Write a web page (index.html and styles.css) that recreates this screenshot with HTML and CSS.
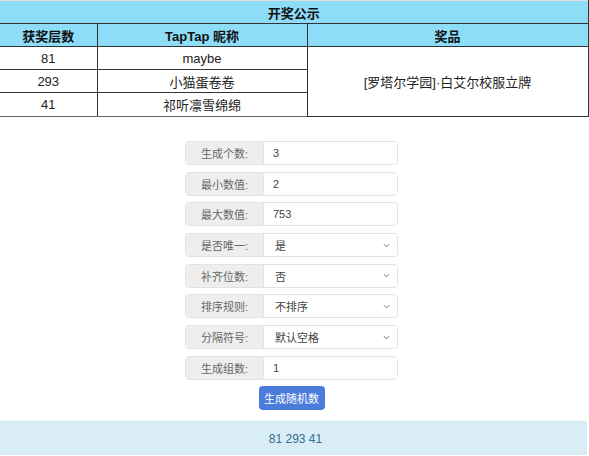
FILE: index.html
```
<!DOCTYPE html>
<html lang="zh">
<head>
<meta charset="utf-8">
<title>开奖公示</title>
<link rel="stylesheet" href="styles.css">
</head>
<body>
<table class="prize">
  <colgroup><col class="c1"><col class="c2"><col class="c3"></colgroup>
  <tr class="title"><th colspan="3">开奖公示</th></tr>
  <tr class="head"><th>获奖层数</th><th>TapTap 昵称</th><th>奖品</th></tr>
  <tr><td>81</td><td>maybe</td><td rowspan="3">[罗塔尔学园]·白艾尔校服立牌</td></tr>
  <tr><td>293</td><td>小猫蛋卷卷</td></tr>
  <tr><td>41</td><td>祁听凛雪绵绵</td></tr>
</table>

<div class="form">
  <div class="group"><span class="addon">生成个数:</span><span class="field">3</span></div>
  <div class="group"><span class="addon">最小数值:</span><span class="field">2</span></div>
  <div class="group"><span class="addon">最大数值:</span><span class="field">753</span></div>
  <div class="group"><span class="addon">是否唯一:</span><span class="field select">是<svg class="chev" viewBox="0 0 8 5" width="7" height="5"><path d="M1 1l3 3 3-3" fill="none" stroke="#666" stroke-width="1.1"/></svg></span></div>
  <div class="group"><span class="addon">补齐位数:</span><span class="field select">否<svg class="chev" viewBox="0 0 8 5" width="7" height="5"><path d="M1 1l3 3 3-3" fill="none" stroke="#666" stroke-width="1.1"/></svg></span></div>
  <div class="group"><span class="addon">排序规则:</span><span class="field select">不排序<svg class="chev" viewBox="0 0 8 5" width="7" height="5"><path d="M1 1l3 3 3-3" fill="none" stroke="#666" stroke-width="1.1"/></svg></span></div>
  <div class="group"><span class="addon">分隔符号:</span><span class="field select">默认空格<svg class="chev" viewBox="0 0 8 5" width="7" height="5"><path d="M1 1l3 3 3-3" fill="none" stroke="#666" stroke-width="1.1"/></svg></span></div>
  <div class="group"><span class="addon">生成组数:</span><span class="field">1</span></div>
  <div class="actions"><button class="btn">生成随机数</button></div>
</div>

<div class="result">81 293 41</div>
</body>
</html>
```
FILE: styles.css
```
html, body {
  margin: 0;
  padding: 0;
  background: #fff;
  font-family: "Liberation Sans", "Noto Sans CJK SC", sans-serif;
}

.prize {
  width: 588px;
  border-collapse: collapse;
  table-layout: fixed;
  font-size: 13px;
  color: #222;
}
.prize .c1 { width: 97px; }
.prize .c2 { width: 210px; }
.prize .c3 { width: 281px; }

.prize th, .prize td {
  border: 1px solid #333;
  text-align: center;
  padding: 0;
  height: 22px;
  font-weight: normal;
}
.prize tr:last-child td { height: 23px; border-bottom-color: #666; }
.prize tr:first-child th { border-top-color: #ddd; }
.prize th:first-child, .prize td:first-child { border-left: none; }
.prize .title th, .prize .head th {
  background: #8ddcf8;
  font-weight: bold;
  color: #111;
}

.form {
  width: 213px;
  margin: 24px 0 0 185px;
  display: flex;
  flex-direction: column;
  font-size: 11px;
  color: #666;
}

.group {
  display: flex;
  height: 24px;
  border: 1px solid #e2e2e2;
  border-radius: 4px;
  margin-bottom: 6.7px;
  box-sizing: border-box;
  overflow: hidden;
}

.addon {
  width: 77px;
  background: #eee;
  border-right: 1px solid #e2e2e2;
  display: flex;
  align-items: center;
  justify-content: center;
}

.field {
  flex: 1;
  display: flex;
  align-items: center;
  padding: 0 9px;
  color: #444;
  background: #fff;
}

.field.select {
  justify-content: space-between;
  padding-left: 11px;
  padding-right: 7px;
}

.chev { display: block; }

.actions {
  display: flex;
  justify-content: center;
  margin-top: -0.5px;
}

.btn {
  width: 66px;
  height: 24px;
  background: #4a7cdb;
  border: none;
  border-radius: 4px;
  color: #fff;
  font-family: inherit;
  font-size: 11px;
  padding: 0;
}

.result {
  margin-top: 11px;
  width: 587px;
  height: 34px;
  box-sizing: border-box;
  background: #d9edf7;
  border-top: 1px solid #cfe7f2;
  color: #31708f;
  font-size: 12px;
  display: flex;
  align-items: center;
  justify-content: center;
  padding-left: 4px;
}
```
